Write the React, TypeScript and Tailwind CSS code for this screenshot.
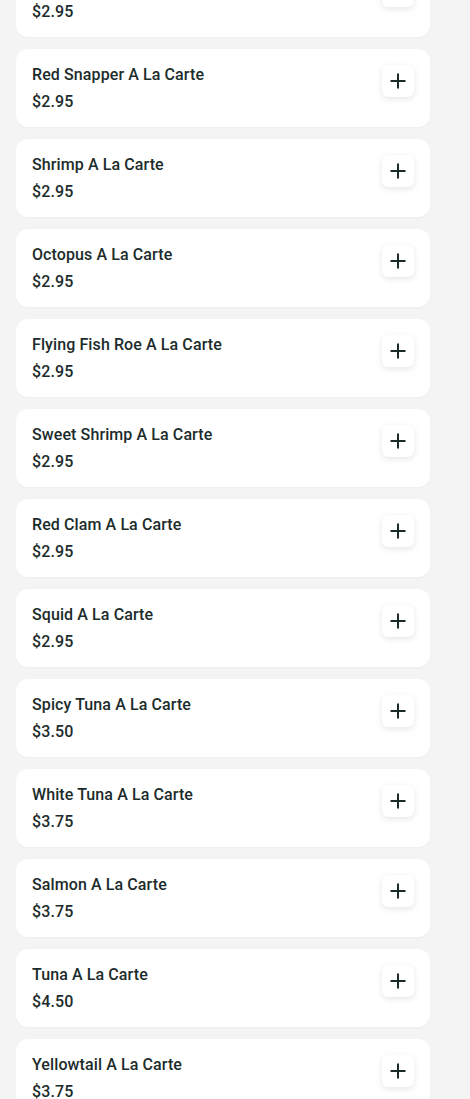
import React from "react";

const items: { name: string; price: string }[] = [
  { name: "Mackerel A La Carte", price: "$2.95" },
  { name: "Red Snapper A La Carte", price: "$2.95" },
  { name: "Shrimp A La Carte", price: "$2.95" },
  { name: "Octopus A La Carte", price: "$2.95" },
  { name: "Flying Fish Roe A La Carte", price: "$2.95" },
  { name: "Sweet Shrimp A La Carte", price: "$2.95" },
  { name: "Red Clam A La Carte", price: "$2.95" },
  { name: "Squid A La Carte", price: "$2.95" },
  { name: "Spicy Tuna A La Carte", price: "$3.50" },
  { name: "White Tuna A La Carte", price: "$3.75" },
  { name: "Salmon A La Carte", price: "$3.75" },
  { name: "Tuna A La Carte", price: "$4.50" },
  { name: "Yellowtail A La Carte", price: "$3.75" },
];

function PlusIcon() {
  return (
    <svg width="16" height="16" viewBox="0 0 16 16" fill="none">
      <path d="M8 0.5V15.5M0.5 8H15.5" stroke="#1b2b2a" strokeWidth="2" />
    </svg>
  );
}

export default function App() {
  return (
    <div className="h-[1099px] overflow-hidden bg-[#f4f4f4] font-['Roboto',sans-serif]">
      <div className="-mt-[41px] flex flex-col gap-3 pl-4 pr-10">
        {items.map((it) => (
          <div
            key={it.name}
            className="flex h-[78px] items-start justify-between rounded-xl bg-white pl-4 pr-4 pt-4 shadow-[0_1px_2px_rgba(0,0,0,0.03)]"
          >
            <div className="flex flex-col pt-px text-[#1c2c2b] tracking-[0.1px]">
              <div className="text-[16px] font-medium leading-[18px]">{it.name}</div>
              <div className="mt-[9px] text-[16px] font-medium leading-[18px]">{it.price}</div>
            </div>
            <button className="flex h-8 w-8 items-center justify-center rounded-md bg-white shadow-[0_2px_6px_rgba(0,0,0,0.10)]">
              <PlusIcon />
            </button>
          </div>
        ))}
      </div>
    </div>
  );
}
